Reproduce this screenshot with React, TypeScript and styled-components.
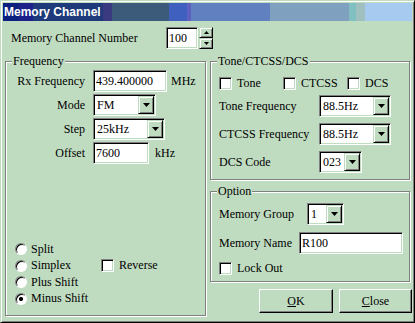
import styled, { createGlobalStyle, css } from 'styled-components';

const FACE = '#c0dcc0';

const GlobalStyle = createGlobalStyle`
    html, body {
        margin: 0;
        padding: 0;
        background: ${FACE};
    }

    body {
        font-family: "Liberation Serif", "Times New Roman", serif;
        font-size: 12px;
        color: #000;
    }
`;

const sunken = css`
    box-sizing: border-box;
    border: 1px solid;
    border-color: #808080 #fff #fff #808080;
    box-shadow: inset 1px 1px 0 #000, inset -1px -1px 0 ${FACE};
    background: #fff;
`;

const raised = css`
    box-sizing: border-box;
    border: 1px solid;
    border-color: ${FACE} #000 #000 ${FACE};
    box-shadow: inset 1px 1px 0 #fff, inset -1px -1px 0 #808080;
    background: ${FACE};
`;

const Window = styled.div`
    width: 415px;
    height: 323px;
    box-sizing: border-box;
    padding: 2px;
    border: 1px solid;
    border-color: ${FACE} #000 #000 ${FACE};
    box-shadow: inset 1px 1px 0 #fff, inset -1px -1px 0 #808080;
    display: flex;
    flex-direction: column;
`;

const TitleBar = styled.div`
    height: 18px;
    flex: none;
    padding-left: 1px;
    font-family: "Liberation Sans", Arial, sans-serif;
    font-weight: bold;
    font-size: 12px;
    line-height: 18px;
    color: #fff;
    background: linear-gradient(
        to right,
        #0b1f7e 0 16px,
        #1c228a 16px 30px,
        #1e3a7a 30px 100px,
        #3a3a80 100px 109px,
        #3c5a7a 109px 166px,
        #4060c0 166px 184px,
        #6060c0 184px 188px,
        #6080c0 188px 267px,
        #80a0c0 267px 346px,
        #80c0c0 346px 353px,
        #a0c0c0 353px 362px,
        #a6caf0 362px
    );
`;

const Body = styled.div`
    flex: 1;
    padding: 6px 2px 0 2px;
    display: flex;
    flex-direction: column;
`;

const TopRow = styled.div`
    display: flex;
    align-items: center;
    height: 22px;
`;

const TopLabel = styled.span`
    width: 161px;
    padding-left: 6px;
    box-sizing: border-box;
`;

const Columns = styled.div`
    margin-top: 12px;
    display: grid;
    grid-template-columns: 201px 200px;
    column-gap: 4px;
`;

const RightColumn = styled.div`
    display: flex;
    flex-direction: column;
`;

const Group = styled.div<{ $height: number; $gap?: number }>`
    position: relative;
    box-sizing: border-box;
    height: ${(p) => p.$height}px;
    margin-top: ${(p) => p.$gap ?? 0}px;
    border: 1px solid #808080;
    box-shadow: inset 1px 1px 0 #fff, 1px 1px 0 #fff;
    display: flex;
    flex-direction: column;
`;

const Caption = styled.span`
    position: absolute;
    top: -8px;
    left: 6px;
    padding: 0 1px;
    line-height: 14px;
    background: ${FACE};
`;

const FieldRows = styled.div<{ $top: number; $left: number; $gap: number }>`
    padding: ${(p) => p.$top}px 0 0 ${(p) => p.$left}px;
    display: flex;
    flex-direction: column;
    gap: ${(p) => p.$gap}px;
`;

const FieldRow = styled.div<{ $height?: number; $gap?: number }>`
    display: flex;
    align-items: center;
    height: ${(p) => p.$height ?? 22}px;
    margin-top: ${(p) => p.$gap ?? 0}px;
`;

const FieldLabel = styled.span<{ $width: number; $right?: boolean }>`
    width: ${(p) => p.$width}px;
    flex: none;
    text-align: ${(p) => (p.$right ? 'right' : 'left')};
    margin-right: ${(p) => (p.$right ? 8 : 0)}px;
`;

const Suffix = styled.span<{ $gap: number }>`
    margin-left: ${(p) => p.$gap}px;
`;

const TextField = styled.input<{ $width: number }>`
    ${sunken};
    width: ${(p) => p.$width}px;
    height: 22px;
    padding: 0 2px;
    margin: 0;
    font: inherit;
    color: #000;
    outline: none;
`;

const Combo = styled.div<{ $width: number }>`
    ${sunken};
    width: ${(p) => p.$width}px;
    height: 22px;
    padding: 1px;
    display: flex;
    align-items: stretch;
`;

const ComboText = styled.span`
    flex: 1;
    padding-left: 2px;
    line-height: 18px;
    overflow: hidden;
`;

const DropButton = styled.span`
    ${raised};
    width: 16px;
    flex: none;
    display: flex;
    align-items: center;
    justify-content: center;
`;

const SpinButtons = styled.div`
    display: flex;
    flex-direction: column;
    margin-left: 1px;
`;

const SpinButton = styled.span`
    ${raised};
    width: 14px;
    height: 11px;
    display: flex;
    align-items: center;
    justify-content: center;
`;

const ChoiceList = styled.div`
    margin-top: auto;
    padding: 0 0 8px 9px;
    display: grid;
    grid-template-columns: 86px auto;
    grid-auto-rows: 16.5px;
    align-items: center;
`;

const Choice = styled.label<{ $col?: number }>`
    grid-column: ${(p) => p.$col ?? 1};
    display: flex;
    align-items: center;
    gap: 5px;
    white-space: nowrap;
`;

const RadioMark = styled.span<{ $on?: boolean }>`
    box-sizing: border-box;
    width: 12px;
    height: 12px;
    flex: none;
    border-radius: 50%;
    border: 1px solid;
    border-color: #808080 #fff #fff #808080;
    box-shadow: inset 1px 1px 0 #000;
    background: ${(p) =>
        p.$on ? 'radial-gradient(circle, #000 0 2px, #fff 2.2px)' : '#fff'};
    margin-right: -1px;
`;

const CheckMark = styled.span`
    ${sunken};
    width: 13px;
    height: 13px;
    flex: none;
`;

const CheckGrid = styled.div`
    display: grid;
    grid-template-columns: 64px 64px auto;
    height: 13px;
    align-items: center;
`;

const ButtonRow = styled.div`
    margin: 7px -2px 0 0;
    display: flex;
    justify-content: flex-end;
    gap: 6px;
`;

const Button = styled.button<{ $width: number }>`
    box-sizing: border-box;
    width: ${(p) => p.$width}px;
    height: 24px;
    padding: 0;
    border: 1px solid;
    border-color: #fff #000 #000 #fff;
    box-shadow: inset -1px -1px 0 #808080, inset 1px 1px 0 ${FACE};
    background: ${FACE};
    font: inherit;
    color: #000;
`;

function Arrow({ up, small }: { up?: boolean; small?: boolean }) {
    const w = small ? 5 : 7;
    const h = small ? 3 : 4;
    const pts = up ? `0,${h} ${w},${h} ${w / 2},0` : `0,0 ${w},0 ${w / 2},${h}`;
    return (
        <svg width={w} height={h} viewBox={`0 0 ${w} ${h}`}>
            <polygon points={pts} fill='#000' />
        </svg>
    );
}

function Select({ value, width }: { value: string; width: number }) {
    return (
        <Combo $width={width}>
            <ComboText>{value}</ComboText>
            <DropButton>
                <Arrow />
            </DropButton>
        </Combo>
    );
}

function Check({ label, col }: { label: string; col?: number }) {
    return (
        <Choice $col={col}>
            <CheckMark />
            {label}
        </Choice>
    );
}

function Radio({ label, on }: { label: string; on?: boolean }) {
    return (
        <Choice>
            <RadioMark $on={on} />
            {label}
        </Choice>
    );
}

function App() {
    return (
        <>
            <GlobalStyle />
            <Window>
                <TitleBar>Memory Channel</TitleBar>
                <Body>
                    <TopRow>
                        <TopLabel>Memory Channel Number</TopLabel>
                        <TextField $width={32} defaultValue='100' readOnly />
                        <SpinButtons>
                            <SpinButton>
                                <Arrow up small />
                            </SpinButton>
                            <SpinButton>
                                <Arrow small />
                            </SpinButton>
                        </SpinButtons>
                    </TopRow>

                    <Columns>
                        <Group $height={255}>
                            <Caption>Frequency</Caption>
                            <FieldRows $top={8} $left={0} $gap={2}>
                                <FieldRow>
                                    <FieldLabel $width={79} $right>
                                        Rx Frequency
                                    </FieldLabel>
                                    <TextField $width={74} defaultValue='439.400000' readOnly />
                                    <Suffix $gap={4}>MHz</Suffix>
                                </FieldRow>
                                <FieldRow>
                                    <FieldLabel $width={79} $right>
                                        Mode
                                    </FieldLabel>
                                    <Select value='FM' width={63} />
                                </FieldRow>
                                <FieldRow>
                                    <FieldLabel $width={79} $right>
                                        Step
                                    </FieldLabel>
                                    <Select value='25kHz' width={72} />
                                </FieldRow>
                                <FieldRow>
                                    <FieldLabel $width={79} $right>
                                        Offset
                                    </FieldLabel>
                                    <TextField $width={56} defaultValue='7600' readOnly />
                                    <Suffix $gap={6}>kHz</Suffix>
                                </FieldRow>
                            </FieldRows>

                            <ChoiceList>
                                <Radio label='Split' />
                                <span />
                                <Radio label='Simplex' />
                                <Check label='Reverse' col={2} />
                                <Radio label='Plus Shift' />
                                <span />
                                <Radio label='Minus Shift' on />
                            </ChoiceList>
                        </Group>

                        <RightColumn>
                            <Group $height={119}>
                                <Caption>Tone/CTCSS/DCS</Caption>
                                <FieldRows $top={14} $left={8} $gap={6}>
                                    <CheckGrid>
                                        <Check label='Tone' col={1} />
                                        <Check label='CTCSS' col={2} />
                                        <Check label='DCS' col={3} />
                                    </CheckGrid>
                                    <FieldRow>
                                        <FieldLabel $width={100}>Tone Frequency</FieldLabel>
                                        <Select value='88.5Hz' width={72} />
                                    </FieldRow>
                                    <FieldRow>
                                        <FieldLabel $width={100}>CTCSS Frequency</FieldLabel>
                                        <Select value='88.5Hz' width={72} />
                                    </FieldRow>
                                    <FieldRow>
                                        <FieldLabel $width={100}>DCS Code</FieldLabel>
                                        <Select value='023' width={43} />
                                    </FieldRow>
                                </FieldRows>
                            </Group>

                            <Group $height={91} $gap={11}>
                                <Caption>Option</Caption>
                                <FieldRows $top={11} $left={8} $gap={0}>
                                    <FieldRow>
                                        <FieldLabel $width={88}>Memory Group</FieldLabel>
                                        <Select value='1' width={37} />
                                    </FieldRow>
                                    <FieldRow $gap={7}>
                                        <FieldLabel $width={80}>Memory Name</FieldLabel>
                                        <TextField $width={104} defaultValue='R100' readOnly />
                                    </FieldRow>
                                    <FieldRow $height={13} $gap={8}>
                                        <Check label='Lock Out' />
                                    </FieldRow>
                                </FieldRows>
                            </Group>

                            <ButtonRow>
                                <Button $width={74}>
                                    <u>O</u>K
                                </Button>
                                <Button $width={73}>
                                    <u>C</u>lose
                                </Button>
                            </ButtonRow>
                        </RightColumn>
                    </Columns>
                </Body>
            </Window>
        </>
    );
}

export default App;
